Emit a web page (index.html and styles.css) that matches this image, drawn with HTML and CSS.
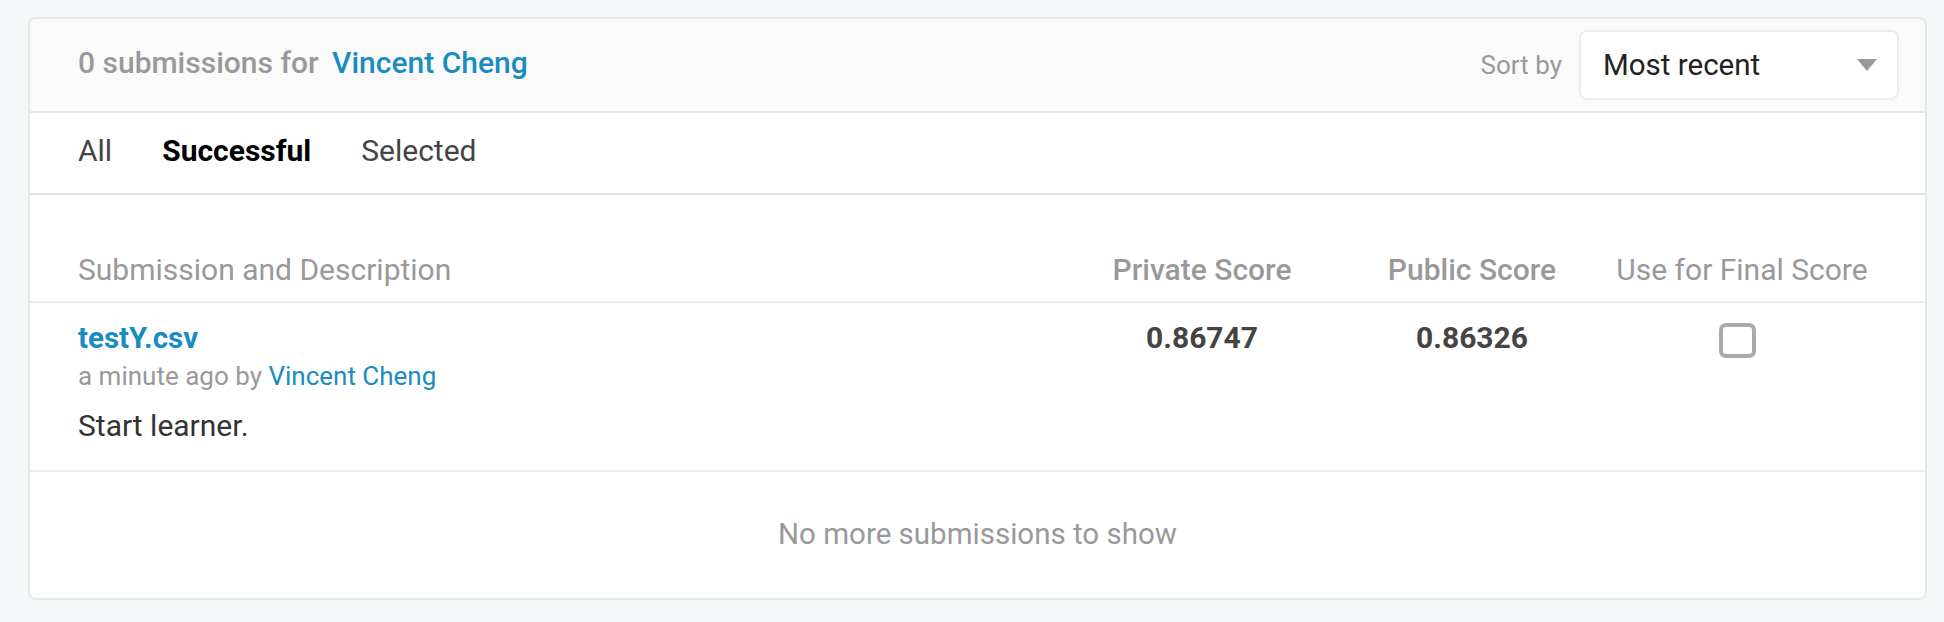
FILE: index.html
```html
<!DOCTYPE html>
<html>
<head>
<meta charset="utf-8">
<link rel="stylesheet" href="styles.css">
</head>
<body>
<div class="card">
  <div class="head">
    <div class="title"><span class="count">0 submissions for</span> <a class="user">Vincent Cheng</a></div>
    <div class="sort">
      <span class="sort-label">Sort by</span>
      <div class="select">
        <span>Most recent</span>
        <svg class="caret" width="20" height="12" viewBox="0 0 20 12"><path d="M0 0H20L10 12Z" fill="#9a9a9a"/></svg>
      </div>
    </div>
  </div>
  <div class="tabs">
    <span class="tab">All</span>
    <span class="tab active">Successful</span>
    <span class="tab">Selected</span>
  </div>
  <div class="grid thead">
    <div class="th">Submission and Description</div>
    <div class="th center bold">Private Score</div>
    <div class="th center bold">Public Score</div>
    <div class="th center">Use for Final Score</div>
  </div>
  <div class="grid row">
    <div class="sub">
      <a class="file">testY.csv</a>
      <div class="meta">a minute ago by <a class="by">Vincent Cheng</a></div>
      <div class="desc">Start learner.</div>
    </div>
    <div class="score">0.86747</div>
    <div class="score">0.86326</div>
    <div class="check-cell"><span class="checkbox"></span></div>
  </div>
  <div class="foot">No more submissions to show</div>
</div>
</body>
</html>
```

FILE: styles.css
```css
html, body {
  margin: 0;
  padding: 0;
  background: #f5f8f9;
}
body {
  padding: 17px 17px 0 28px;
  font-family: Roboto, "Liberation Sans", sans-serif;
}
.card {
  background: #fff;
  border: 2px solid #e6e8e9;
  border-radius: 8px;
  overflow: hidden;
}
.head {
  display: flex;
  align-items: center;
  justify-content: space-between;
  background: #fafafa;
  padding: 11px 26px 11px 48px;
  border-bottom: 2px solid #e8e8e8;
}
.title {
  font-size: 30px;
  font-weight: 500;
  color: #999;
  margin-bottom: 5px;
}
.user {
  color: #1a8cc0;
  margin-left: 6px;
}
.sort {
  display: flex;
  align-items: center;
  gap: 17px;
}
.sort-label {
  font-size: 26px;
  color: #999;
}
.select {
  width: 320px;
  height: 70px;
  box-sizing: border-box;
  background: #fff;
  border: 2px solid #ececec;
  border-radius: 8px;
  display: flex;
  align-items: center;
  justify-content: space-between;
  padding: 0 20px 0 22px;
  font-size: 29.5px;
  color: #222;
}
.tabs {
  display: flex;
  gap: 50px;
  height: 80px;
  align-items: center;
  padding: 0 48px;
  border-bottom: 2px solid #e2e2e2;
  font-size: 30px;
  color: #444;
}
.tabs .tab {
  margin-top: -6px;
}
.tab.active {
  color: #000;
  font-weight: 700;
}
.grid {
  display: grid;
  grid-template-columns: 1fr 270px 270px 270px;
  padding: 0 48px;
}
.thead {
  padding-top: 57px;
  padding-bottom: 13px;
  border-bottom: 2px solid #ededed;
}
.th {
  font-size: 30px;
  line-height: 36px;
  color: #999;
}
.th.center { text-align: center; }
.th.bold { font-weight: 500; }
.row {
  padding-top: 17px;
  padding-bottom: 27px;
  border-bottom: 2px solid #ededed;
}
.file {
  display: block;
  font-size: 29.5px;
  line-height: 36px;
  font-weight: 700;
  color: #1a8cc0;
}
.meta {
  font-size: 26px;
  line-height: 40px;
  color: #999;
}
.by { color: #1a8cc0; }
.desc {
  margin-top: 13px;
  font-size: 30px;
  line-height: 34px;
  color: #333;
}
.score {
  text-align: center;
  font-size: 30px;
  line-height: 36px;
  font-weight: 700;
  color: #444;
}
.check-cell {
  display: flex;
  justify-content: center;
  padding-top: 3px;
  padding-right: 10px;
}
.checkbox {
  width: 37px;
  height: 35px;
  box-sizing: border-box;
  border: 4px solid #aaa;
  border-radius: 7px;
}
.foot {
  text-align: center;
  padding: 44px 0 46px;
  font-size: 29.5px;
  line-height: 36px;
  color: #999;
}
```
